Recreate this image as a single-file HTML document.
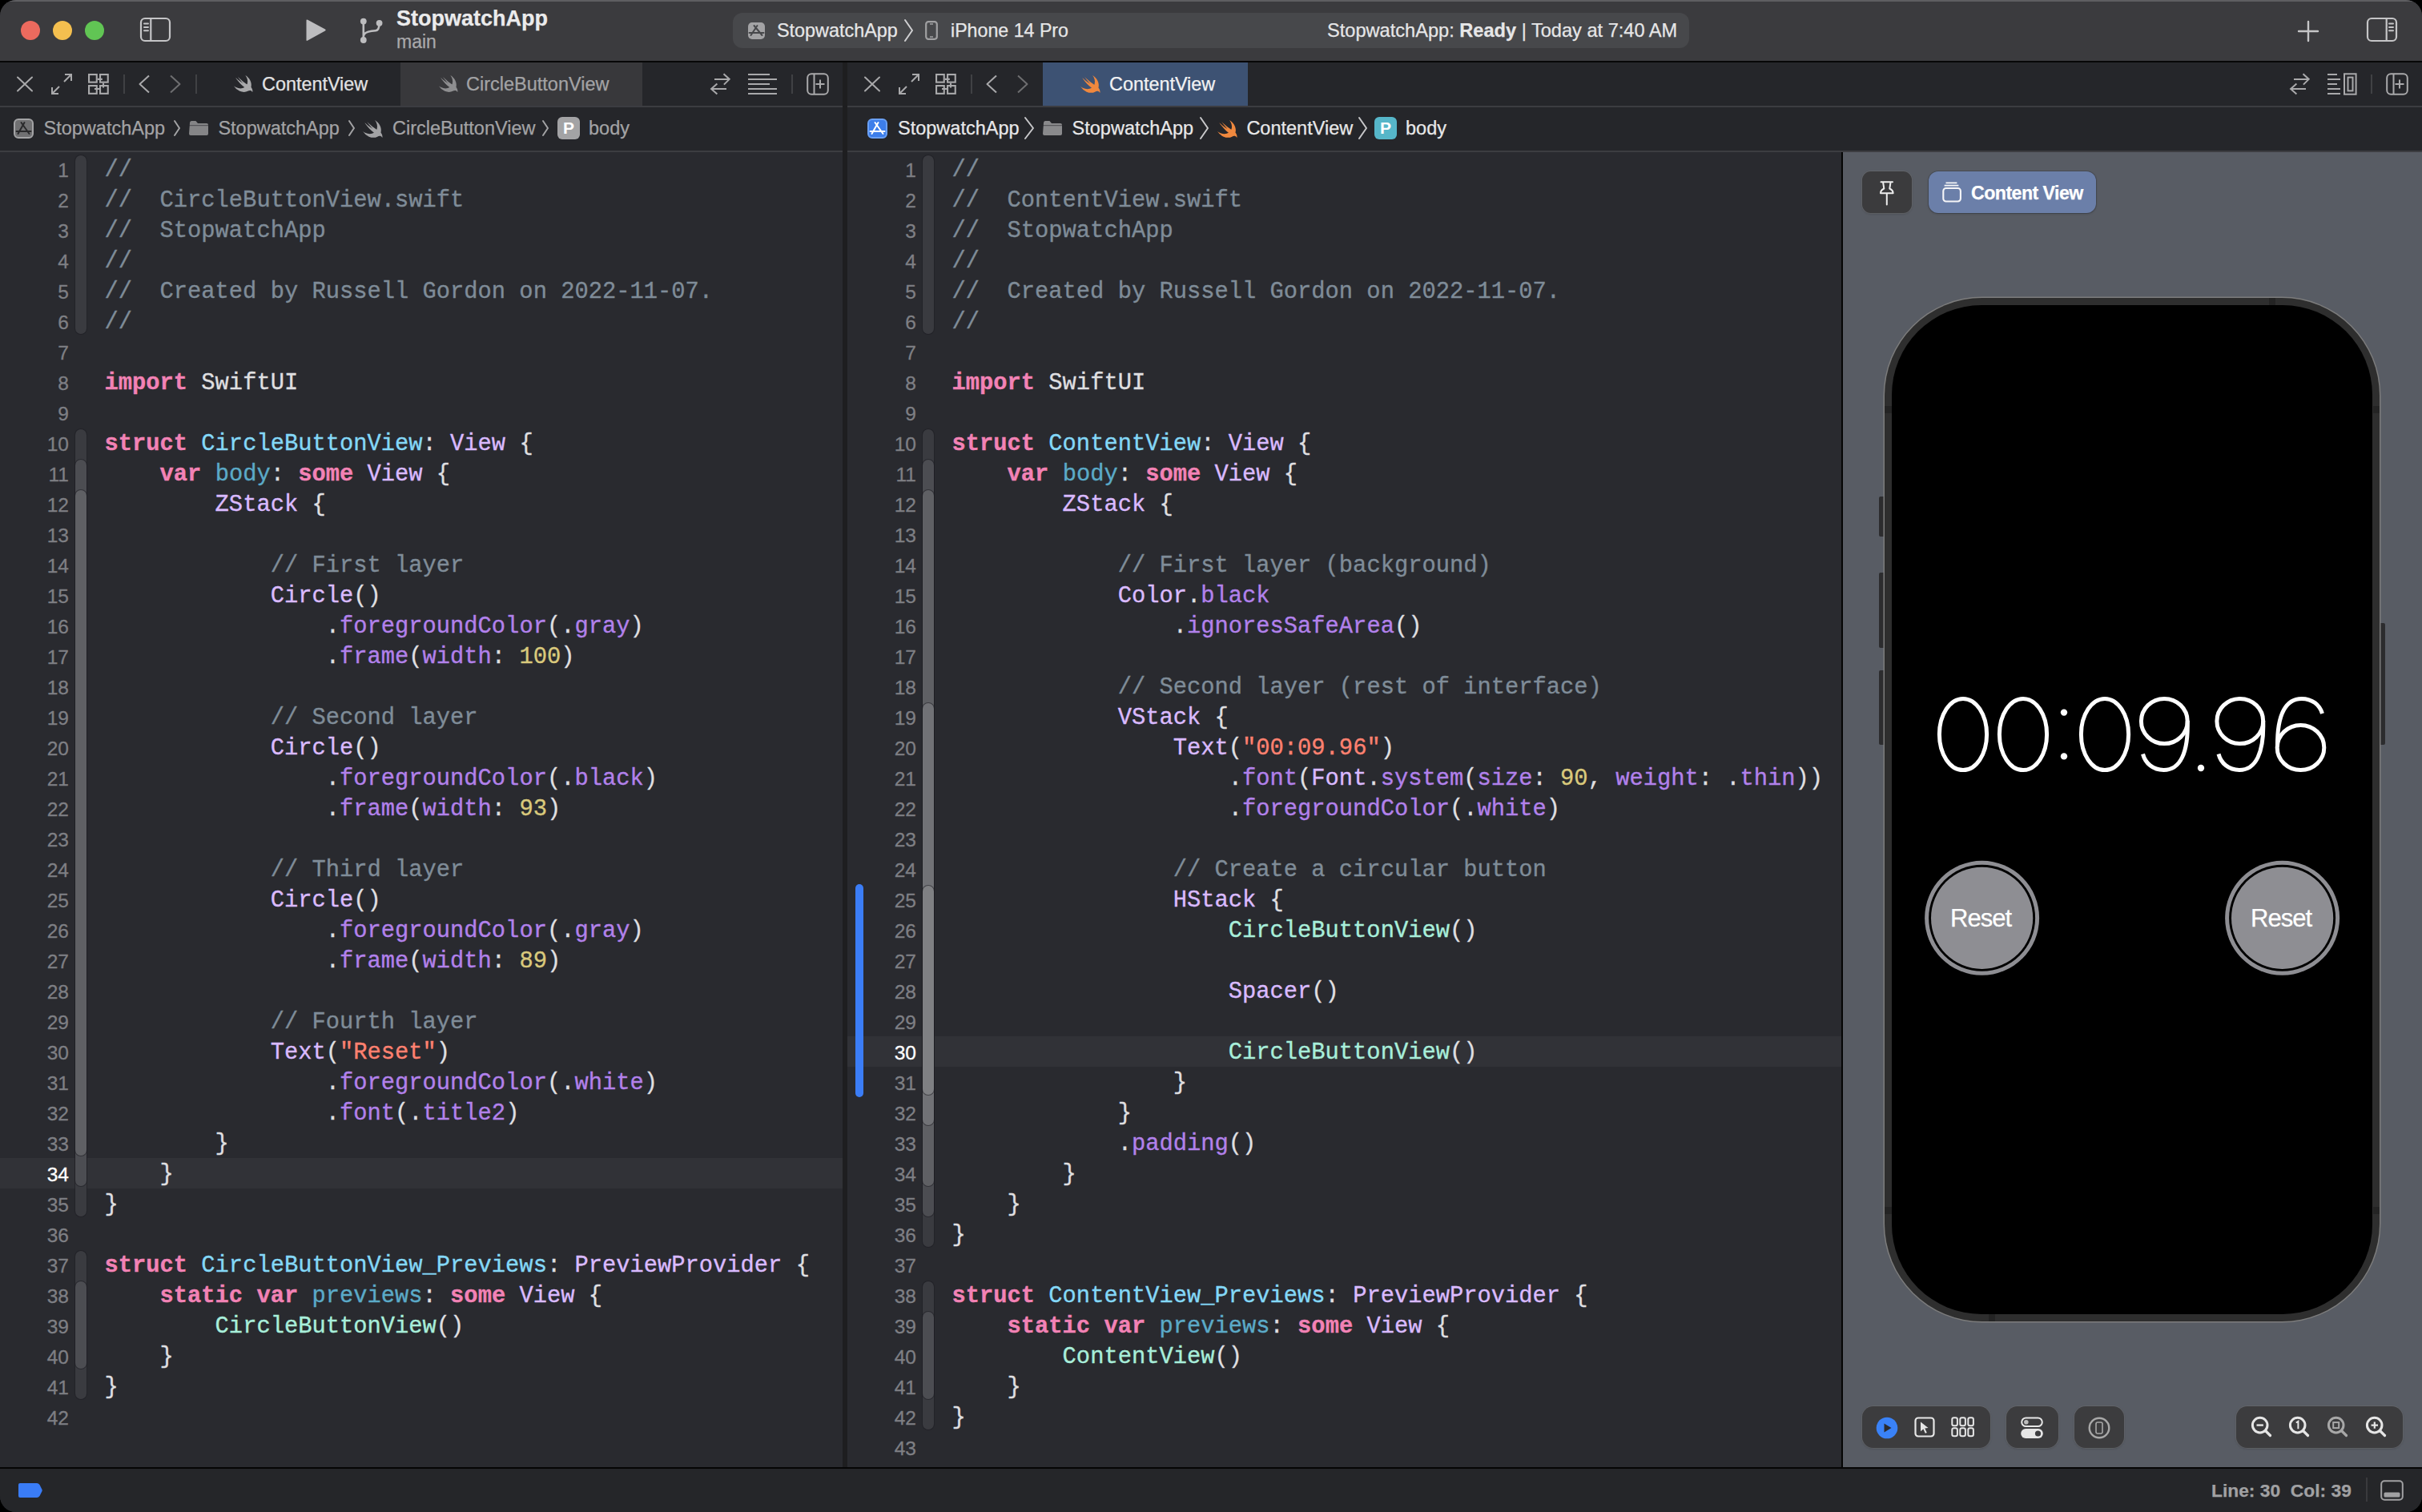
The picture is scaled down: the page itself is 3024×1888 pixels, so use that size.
<!DOCTYPE html>
<html><head><meta charset="utf-8"><style>
*{margin:0;padding:0;box-sizing:border-box}
html,body{width:3024px;height:1888px;overflow:hidden;background:#000}
body{position:relative;font-family:"Liberation Sans",sans-serif}
.abs{position:absolute}
#win{position:absolute;left:0;top:0;width:3024px;height:1888px;border-radius:20px;overflow:hidden;background:#292A30}
.ln{position:absolute;height:38.0px;line-height:38.0px;text-align:right;font-family:"Liberation Sans",sans-serif;font-size:24.5px;padding-top:2.6px;-webkit-text-stroke:0.3px currentColor}
.cl{position:absolute;height:38.0px;line-height:38.0px;white-space:pre;font-family:"Liberation Mono",monospace;font-size:28.78px;color:#DFDFE0;padding-top:2.9px;-webkit-text-stroke:0.35px currentColor}
.pl{color:#DFDFE0} .cm{color:#7F8C98} .kw{color:#F282B5;font-weight:bold} .ty{color:#DABAFF}
.fn{color:#B281EB} .dc{color:#84D8F7} .od{color:#5BAAC8} .nm{color:#D9C97C} .st{color:#FF8170} .pc{color:#A8EEDA}
.ui{position:absolute;white-space:pre;font-family:"Liberation Sans",sans-serif;-webkit-text-stroke:0.25px currentColor}
svg{position:absolute;overflow:visible}
</style></head>
<body><div id="win">
<div class="abs" style="left:0;top:0;width:3024px;height:76px;background:#3B3B3E;border-top:2px solid #5E5E61"></div>
<div class="abs" style="left:0;top:76px;width:3024px;height:2px;background:#070707"></div>
<div class="abs" style="left:26px;top:26px;width:24px;height:24px;border-radius:50%;background:#EC6A5E"></div>
<div class="abs" style="left:66px;top:26px;width:24px;height:24px;border-radius:50%;background:#F4BF4F"></div>
<div class="abs" style="left:106px;top:26px;width:24px;height:24px;border-radius:50%;background:#61C554"></div>
<svg style="left:174px;top:21px" width="40" height="32" viewBox="0 0 40 32"><rect x="2" y="2" width="36" height="28" rx="5" fill="none" stroke="#C5C5C7" stroke-width="2.2"/><line x1="14.3" y1="2" x2="14.3" y2="30" stroke="#C5C5C7" stroke-width="2.2"/><path d="M6 8.4h5M6 12.9h5M6 17.2h5" stroke="#C5C5C7" stroke-width="2" stroke-linecap="round"/></svg>
<svg style="left:380px;top:23px" width="28" height="30" viewBox="0 0 28 30"><path d="M2.5 2.5 Q2.5 0.8 4.2 1.8 L26 13.6 Q27.6 14.6 26 15.6 L4.2 27.6 Q2.5 28.6 2.5 27 Z" fill="#BDBDBF"/></svg>
<svg style="left:440px;top:16px" width="50" height="44" viewBox="0 0 50 44"><circle cx="13.8" cy="10.6" r="3.9" fill="#BDBDBF"/><circle cx="33.6" cy="12.8" r="3.9" fill="#BDBDBF"/><circle cx="13.8" cy="34" r="3.9" fill="#BDBDBF"/><path d="M13.8 10.6 V34 M13.8 29 C14.5 25 18 23.5 24 22.8 L29 22.3 C32 22 33.6 19 33.6 12.8" stroke="#BDBDBF" stroke-width="2.6" fill="none"/></svg>
<div class="ui" style="left:495.0px;top:8.32px;font-size:27px;line-height:31.05px;color:#EBEBEC;font-weight:bold;letter-spacing:0px;">StopwatchApp</div>
<div class="ui" style="left:495.0px;top:38.61px;font-size:23px;line-height:26.45px;color:#A9A9AB;font-weight:normal;letter-spacing:0px;">main</div>
<div class="abs" style="left:915px;top:16px;width:1194px;height:44px;border-radius:12px;background:#47484B"></div>
<svg style="left:933px;top:27px" width="23" height="23" viewBox="0 0 23 23"><rect x="1" y="1" width="21" height="21" rx="5" fill="#A3A3A5" /><path d="M4.5 17.0 L12.5 5.0 M8.5 5.0 L18.5 17.0 M2.5 14.0 L20.5 14.0" stroke="#47484B" stroke-width="2" fill="none" stroke-linecap="round"/></svg>
<div class="ui" style="left:970.0px;top:25.14px;font-size:23.4px;line-height:26.91px;color:#E6E6E7;font-weight:normal;letter-spacing:0px;">StopwatchApp</div>
<svg style="left:1129px;top:24px" width="11" height="28" viewBox="0 0 11 28"><path d="M1 1 L10 14.0 L1 27" stroke="#D0D0D2" stroke-width="2" fill="none" stroke-linecap="round" stroke-linejoin="round"/></svg>
<svg style="left:1155px;top:26px" width="16" height="24" viewBox="0 0 16 24"><rect x="1.2" y="1.2" width="13.6" height="21.6" rx="3" fill="none" stroke="#A0A0A2" stroke-width="2.2"/><path d="M6 4h4M6 20h4" stroke="#A0A0A2" stroke-width="1.4"/></svg>
<div class="ui" style="left:1187.0px;top:25.32px;font-size:23.2px;line-height:26.68px;color:#E6E6E7;font-weight:normal;letter-spacing:0px;">iPhone 14 Pro</div>
<div class="ui" style="left:1657.0px;top:24.95px;font-size:23.6px;line-height:27.14px;color:#E6E6E7;font-weight:normal;letter-spacing:0px;">StopwatchApp: <b>Ready</b> | Today at 7:40 AM</div>
<svg style="left:2868px;top:25px" width="28" height="28" viewBox="0 0 28 28"><path d="M14 2V26M2 14H26" stroke="#C5C5C7" stroke-width="2.4" stroke-linecap="round"/></svg>
<svg style="left:2954px;top:21px" width="40" height="32" viewBox="0 0 40 32"><rect x="2" y="2" width="36" height="28" rx="5" fill="none" stroke="#C5C5C7" stroke-width="2.2"/><line x1="25.7" y1="2" x2="25.7" y2="30" stroke="#C5C5C7" stroke-width="2.2"/><path d="M29 8.4h5M29 12.9h5M29 17.2h5" stroke="#C5C5C7" stroke-width="2" stroke-linecap="round"/></svg>
<div class="abs" style="left:0;top:78px;width:3024px;height:54px;background:#25262A"></div>
<div class="abs" style="left:0;top:132px;width:3024px;height:2px;background:#3C3D41"></div>
<div class="abs" style="left:0;top:134px;width:3024px;height:54px;background:#25262A"></div>
<div class="abs" style="left:0;top:188px;width:3024px;height:2px;background:#3C3D41"></div>
<svg style="left:20px;top:95px" width="22" height="20" viewBox="0 0 22 20"><path d="M2 1.5 L20 18.5 M20 1.5 L2 18.5" stroke="#A9A9AB" stroke-width="2" stroke-linecap="round"/></svg><svg style="left:63px;top:91px" width="28" height="28" viewBox="0 0 28 28"><path d="M11 17 L2 26 M2 18 V26 H10 M17 11 L26 2 M18 2 H26 V10" stroke="#A9A9AB" stroke-width="2" fill="none"/></svg><svg style="left:109px;top:91px" width="28" height="28" viewBox="0 0 28 28"><rect x="2.05" y="2.05" width="9.7" height="9.6" fill="none" stroke="#A9A9AB" stroke-width="2.1"/><rect x="16.05" y="2.05" width="9.7" height="9.6" fill="none" stroke="#A9A9AB" stroke-width="2.1"/><rect x="2.05" y="16.05" width="9.7" height="9.8" fill="none" stroke="#A9A9AB" stroke-width="2.1"/><rect x="16.05" y="16.05" width="9.7" height="9.8" fill="none" stroke="#A9A9AB" stroke-width="2.1"/><path d="M12.8 7.9 H18.8 M20 12.7 V18.5 M9 20 H15" stroke="#A9A9AB" stroke-width="2.1"/></svg><div class="abs" style="left:154px;top:93px;width:2px;height:24px;background:#404144"></div><svg style="left:172px;top:93px" width="16" height="24" viewBox="0 0 16 24"><path d="M14 1.5 L2.5 12 L14 22.5" stroke="#A9A9AB" stroke-width="2" fill="none" stroke-linejoin="round"/></svg><svg style="left:211px;top:93px" width="16" height="24" viewBox="0 0 16 24"><path d="M2 1.5 L13.5 12 L2 22.5" stroke="#6E6E70" stroke-width="2" fill="none" stroke-linejoin="round"/></svg><div class="abs" style="left:244px;top:93px;width:2px;height:24px;background:#404144"></div>
<svg style="left:1078px;top:95px" width="22" height="20" viewBox="0 0 22 20"><path d="M2 1.5 L20 18.5 M20 1.5 L2 18.5" stroke="#A9A9AB" stroke-width="2" stroke-linecap="round"/></svg><svg style="left:1121px;top:91px" width="28" height="28" viewBox="0 0 28 28"><path d="M11 17 L2 26 M2 18 V26 H10 M17 11 L26 2 M18 2 H26 V10" stroke="#A9A9AB" stroke-width="2" fill="none"/></svg><svg style="left:1167px;top:91px" width="28" height="28" viewBox="0 0 28 28"><rect x="2.05" y="2.05" width="9.7" height="9.6" fill="none" stroke="#A9A9AB" stroke-width="2.1"/><rect x="16.05" y="2.05" width="9.7" height="9.6" fill="none" stroke="#A9A9AB" stroke-width="2.1"/><rect x="2.05" y="16.05" width="9.7" height="9.8" fill="none" stroke="#A9A9AB" stroke-width="2.1"/><rect x="16.05" y="16.05" width="9.7" height="9.8" fill="none" stroke="#A9A9AB" stroke-width="2.1"/><path d="M12.8 7.9 H18.8 M20 12.7 V18.5 M9 20 H15" stroke="#A9A9AB" stroke-width="2.1"/></svg><div class="abs" style="left:1212px;top:93px;width:2px;height:24px;background:#404144"></div><svg style="left:1230px;top:93px" width="16" height="24" viewBox="0 0 16 24"><path d="M14 1.5 L2.5 12 L14 22.5" stroke="#A9A9AB" stroke-width="2" fill="none" stroke-linejoin="round"/></svg><svg style="left:1269px;top:93px" width="16" height="24" viewBox="0 0 16 24"><path d="M2 1.5 L13.5 12 L2 22.5" stroke="#6E6E70" stroke-width="2" fill="none" stroke-linejoin="round"/></svg><div class="abs" style="left:1302px;top:93px;width:2px;height:24px;background:#404144"></div>
<svg style="left:290.1px;top:93.9px" width="25.8" height="22.0" viewBox="0.9 3.4 19.9 17"><path d="M13.543 3.41c4.114 2.47 6.545 7.162 5.549 11.131-.024.093-.05.181-.076.272l.002.001c2.062 2.538 1.5 5.258 1.236 4.745-1.072-2.086-3.066-1.568-4.088-1.043a6.803 6.803 0 0 1-.281.158l-.02.012-.002.002c-2.115 1.123-4.957 1.205-7.812-.022a12.568 12.568 0 0 1-5.64-4.838c.649.48 1.35.902 2.097 1.252 3.019 1.414 6.051 1.311 8.197-.002C9.651 12.73 7.101 9.67 5.146 7.191a10.628 10.628 0 0 1-1.005-1.384c2.34 2.142 6.038 4.83 7.365 5.576C8.69 8.408 6.208 4.743 6.324 4.86c4.436 4.47 8.528 6.996 8.528 6.996.154.085.27.154.36.213.085-.215.16-.437.224-.668.708-2.588-.09-5.548-1.893-7.992z" fill="#A9A9AB"/></svg>
<div class="ui" style="left:327.0px;top:92.04px;font-size:23.4px;line-height:26.91px;color:#E2E2E3;font-weight:normal;letter-spacing:0px;">ContentView</div>
<div class="abs" style="left:500px;top:78px;width:302px;height:54px;background:#38383B"></div>
<svg style="left:546.1px;top:93.9px" width="25.8" height="22.0" viewBox="0.9 3.4 19.9 17"><path d="M13.543 3.41c4.114 2.47 6.545 7.162 5.549 11.131-.024.093-.05.181-.076.272l.002.001c2.062 2.538 1.5 5.258 1.236 4.745-1.072-2.086-3.066-1.568-4.088-1.043a6.803 6.803 0 0 1-.281.158l-.02.012-.002.002c-2.115 1.123-4.957 1.205-7.812-.022a12.568 12.568 0 0 1-5.64-4.838c.649.48 1.35.902 2.097 1.252 3.019 1.414 6.051 1.311 8.197-.002C9.651 12.73 7.101 9.67 5.146 7.191a10.628 10.628 0 0 1-1.005-1.384c2.34 2.142 6.038 4.83 7.365 5.576C8.69 8.408 6.208 4.743 6.324 4.86c4.436 4.47 8.528 6.996 8.528 6.996.154.085.27.154.36.213.085-.215.16-.437.224-.668.708-2.588-.09-5.548-1.893-7.992z" fill="#8E8E90"/></svg>
<div class="ui" style="left:582.0px;top:91.94px;font-size:23.5px;line-height:27.02px;color:#A3A3A5;font-weight:normal;letter-spacing:0px;">CircleButtonView</div>
<svg style="left:887px;top:90px" width="26" height="30" viewBox="0 0 26 30"><path d="M5 8.9 H23.7 M16.5 2.3 L23.7 8.9 L16.9 15.6 M20 21 H1.2 M8.4 14.5 L1.1 21 L8.4 27.4" stroke="#A9A9AB" stroke-width="2" fill="none"/></svg>
<svg style="left:933px;top:91px" width="38" height="28" viewBox="0 0 38 28"><path d="M1 2h27 M1 8h36 M1 14h27 M1 20h36 M1 26h36" stroke="#A9A9AB" stroke-width="2"/></svg>
<div class="abs" style="left:988px;top:93px;width:2px;height:24px;background:#404144"></div>
<svg style="left:1007px;top:91px" width="28" height="28" viewBox="0 0 28 28"><rect x="1.2" y="1.2" width="25.6" height="25.6" rx="5" fill="none" stroke="#A9A9AB" stroke-width="2"/><line x1="9.5" y1="1.2" x2="9.5" y2="26.8" stroke="#A9A9AB" stroke-width="2"/><path d="M17 8.5V19.5M11.5 14H22.5" stroke="#A9A9AB" stroke-width="2"/></svg>
<div class="abs" style="left:1302px;top:78px;width:256px;height:54px;background:#3D5273"></div>
<svg style="left:1347.1px;top:93.9px" width="26.9" height="23.0" viewBox="0.9 3.4 19.9 17"><path d="M13.543 3.41c4.114 2.47 6.545 7.162 5.549 11.131-.024.093-.05.181-.076.272l.002.001c2.062 2.538 1.5 5.258 1.236 4.745-1.072-2.086-3.066-1.568-4.088-1.043a6.803 6.803 0 0 1-.281.158l-.02.012-.002.002c-2.115 1.123-4.957 1.205-7.812-.022a12.568 12.568 0 0 1-5.64-4.838c.649.48 1.35.902 2.097 1.252 3.019 1.414 6.051 1.311 8.197-.002C9.651 12.73 7.101 9.67 5.146 7.191a10.628 10.628 0 0 1-1.005-1.384c2.34 2.142 6.038 4.83 7.365 5.576C8.69 8.408 6.208 4.743 6.324 4.86c4.436 4.47 8.528 6.996 8.528 6.996.154.085.27.154.36.213.085-.215.16-.437.224-.668.708-2.588-.09-5.548-1.893-7.992z" fill="#F0883E"/></svg>
<div class="ui" style="left:1385.0px;top:92.04px;font-size:23.4px;line-height:26.91px;color:#F2F2F3;font-weight:normal;letter-spacing:0px;">ContentView</div>
<svg style="left:2859px;top:90px" width="26" height="30" viewBox="0 0 26 30"><path d="M5 8.9 H23.7 M16.5 2.3 L23.7 8.9 L16.9 15.6 M20 21 H1.2 M8.4 14.5 L1.1 21 L8.4 27.4" stroke="#A9A9AB" stroke-width="2" fill="none"/></svg>
<svg style="left:2905px;top:91px" width="38" height="28" viewBox="0 0 38 28"><path d="M1 2h12 M1 8h16 M1 14h12 M1 20h16 M1 26h16" stroke="#A9A9AB" stroke-width="2"/><rect x="22" y="1.3" width="14.6" height="25.4" fill="none" stroke="#A9A9AB" stroke-width="2"/><rect x="26.5" y="5.6" width="6" height="16.8" fill="none" stroke="#A9A9AB" stroke-width="2"/></svg>
<div class="abs" style="left:2960px;top:93px;width:2px;height:24px;background:#404144"></div>
<svg style="left:2979px;top:91px" width="28" height="28" viewBox="0 0 28 28"><rect x="1.2" y="1.2" width="25.6" height="25.6" rx="5" fill="none" stroke="#A9A9AB" stroke-width="2"/><line x1="9.5" y1="1.2" x2="9.5" y2="26.8" stroke="#A9A9AB" stroke-width="2"/><path d="M17 8.5V19.5M11.5 14H22.5" stroke="#A9A9AB" stroke-width="2"/></svg>
<svg style="left:17px;top:148px" width="25" height="25" viewBox="0 0 25 25"><rect x="1" y="1" width="23" height="23" rx="5" fill="#707072" stroke="#A3A3A5" stroke-width="2"/><path d="M5.5 19.0 L13.5 5.0 M9.5 5.0 L19.5 19.0 M3.5 16.0 L21.5 16.0" stroke="#2A2A2C" stroke-width="2" fill="none" stroke-linecap="round"/></svg>
<div class="ui" style="left:54.5px;top:146.54px;font-size:23.5px;line-height:27.02px;color:#A3A3A5;font-weight:normal;letter-spacing:0px;">StopwatchApp</div>
<svg style="left:217px;top:150px" width="8" height="20" viewBox="0 0 8 20"><path d="M1 1 L7 10.0 L1 19" stroke="#A3A3A5" stroke-width="2" fill="none" stroke-linecap="round" stroke-linejoin="round"/></svg>
<svg style="left:235px;top:150px" width="26" height="20" viewBox="0 0 26 20"><path d="M2 3.6 Q2 1 4 1 L9.4 1 L12.0 4.0 L23.0 4.0 Q25.0 4.0 25.0 6.0 L25.0 17.0 Q25.0 19.0 23.0 19.0 L3 19.0 Q1 19.0 1 17.0 Z" fill="#858587"/><rect x="1" y="6.0" width="24" height="1.2" fill="#25262A" opacity="0.5"/></svg>
<div class="ui" style="left:272.4px;top:146.54px;font-size:23.5px;line-height:27.02px;color:#A3A3A5;font-weight:normal;letter-spacing:0px;">StopwatchApp</div>
<svg style="left:435px;top:150px" width="8" height="20" viewBox="0 0 8 20"><path d="M1 1 L7 10.0 L1 19" stroke="#A3A3A5" stroke-width="2" fill="none" stroke-linecap="round" stroke-linejoin="round"/></svg>
<svg style="left:451.1px;top:149.9px" width="26.9" height="23.0" viewBox="0.9 3.4 19.9 17"><path d="M13.543 3.41c4.114 2.47 6.545 7.162 5.549 11.131-.024.093-.05.181-.076.272l.002.001c2.062 2.538 1.5 5.258 1.236 4.745-1.072-2.086-3.066-1.568-4.088-1.043a6.803 6.803 0 0 1-.281.158l-.02.012-.002.002c-2.115 1.123-4.957 1.205-7.812-.022a12.568 12.568 0 0 1-5.64-4.838c.649.48 1.35.902 2.097 1.252 3.019 1.414 6.051 1.311 8.197-.002C9.651 12.73 7.101 9.67 5.146 7.191a10.628 10.628 0 0 1-1.005-1.384c2.34 2.142 6.038 4.83 7.365 5.576C8.69 8.408 6.208 4.743 6.324 4.86c4.436 4.47 8.528 6.996 8.528 6.996.154.085.27.154.36.213.085-.215.16-.437.224-.668.708-2.588-.09-5.548-1.893-7.992z" fill="#A3A3A5"/></svg>
<div class="ui" style="left:490.0px;top:146.54px;font-size:23.5px;line-height:27.02px;color:#A3A3A5;font-weight:normal;letter-spacing:0px;">CircleButtonView</div>
<svg style="left:677px;top:150px" width="8" height="20" viewBox="0 0 8 20"><path d="M1 1 L7 10.0 L1 19" stroke="#A3A3A5" stroke-width="2" fill="none" stroke-linecap="round" stroke-linejoin="round"/></svg>
<div class="abs" style="left:696px;top:146px;width:28px;height:28px;border-radius:6px;background:#A3A3A5;color:#FFFFFF;font-family:'Liberation Sans',sans-serif;font-weight:bold;font-size:21px;line-height:28px;text-align:center">P</div>
<div class="ui" style="left:735.0px;top:146.54px;font-size:23.5px;line-height:27.02px;color:#A3A3A5;font-weight:normal;letter-spacing:0px;">body</div>
<svg style="left:1083px;top:148px" width="25" height="25" viewBox="0 0 25 25"><rect x="1" y="1" width="23" height="23" rx="5" fill="#3D7EEA" stroke="#6AA0F5" stroke-width="2"/><path d="M5.5 19.0 L13.5 5.0 M9.5 5.0 L19.5 19.0 M3.5 16.0 L21.5 16.0" stroke="#FFFFFF" stroke-width="2" fill="none" stroke-linecap="round"/></svg>
<div class="ui" style="left:1121.0px;top:146.54px;font-size:23.5px;line-height:27.02px;color:#E8E8E9;font-weight:normal;letter-spacing:0px;">StopwatchApp</div>
<svg style="left:1279px;top:146px" width="12" height="28" viewBox="0 0 12 28"><path d="M1 1 L11 14.0 L1 27" stroke="#C8C8CA" stroke-width="2" fill="none" stroke-linecap="round" stroke-linejoin="round"/></svg>
<svg style="left:1301px;top:150px" width="26" height="20" viewBox="0 0 26 20"><path d="M2 3.6 Q2 1 4 1 L9.4 1 L12.0 4.0 L23.0 4.0 Q25.0 4.0 25.0 6.0 L25.0 17.0 Q25.0 19.0 23.0 19.0 L3 19.0 Q1 19.0 1 17.0 Z" fill="#8A8A8C"/><rect x="1" y="6.0" width="24" height="1.2" fill="#25262A" opacity="0.5"/></svg>
<div class="ui" style="left:1338.6px;top:146.54px;font-size:23.5px;line-height:27.02px;color:#E8E8E9;font-weight:normal;letter-spacing:0px;">StopwatchApp</div>
<svg style="left:1498px;top:146px" width="11" height="28" viewBox="0 0 11 28"><path d="M1 1 L10 14.0 L1 27" stroke="#C8C8CA" stroke-width="2" fill="none" stroke-linecap="round" stroke-linejoin="round"/></svg>
<svg style="left:1517.8px;top:149.9px" width="26.9" height="23.0" viewBox="0.9 3.4 19.9 17"><path d="M13.543 3.41c4.114 2.47 6.545 7.162 5.549 11.131-.024.093-.05.181-.076.272l.002.001c2.062 2.538 1.5 5.258 1.236 4.745-1.072-2.086-3.066-1.568-4.088-1.043a6.803 6.803 0 0 1-.281.158l-.02.012-.002.002c-2.115 1.123-4.957 1.205-7.812-.022a12.568 12.568 0 0 1-5.64-4.838c.649.48 1.35.902 2.097 1.252 3.019 1.414 6.051 1.311 8.197-.002C9.651 12.73 7.101 9.67 5.146 7.191a10.628 10.628 0 0 1-1.005-1.384c2.34 2.142 6.038 4.83 7.365 5.576C8.69 8.408 6.208 4.743 6.324 4.86c4.436 4.47 8.528 6.996 8.528 6.996.154.085.27.154.36.213.085-.215.16-.437.224-.668.708-2.588-.09-5.548-1.893-7.992z" fill="#F0883E"/></svg>
<div class="ui" style="left:1556.4px;top:146.54px;font-size:23.5px;line-height:27.02px;color:#E8E8E9;font-weight:normal;letter-spacing:0px;">ContentView</div>
<svg style="left:1695.5px;top:146px" width="11" height="28" viewBox="0 0 11 28"><path d="M1 1 L10 14.0 L1 27" stroke="#C8C8CA" stroke-width="2" fill="none" stroke-linecap="round" stroke-linejoin="round"/></svg>
<div class="abs" style="left:1716px;top:146px;width:28px;height:28px;border-radius:6px;background:#56B6C9;color:#FFFFFF;font-family:'Liberation Sans',sans-serif;font-weight:bold;font-size:21px;line-height:28px;text-align:center">P</div>
<div class="ui" style="left:1755.0px;top:146.54px;font-size:23.5px;line-height:27.02px;color:#E8E8E9;font-weight:normal;letter-spacing:0px;">body</div>
<div class="abs" style="left:0;top:190px;width:1052px;height:1642px;background:#292A2F;overflow:hidden">
<div style="position:absolute;left:0px;top:1255.60px;width:1052px;height:38.00px;background:#313237"></div>
<div style="position:absolute;left:94px;top:3.90px;width:14px;height:223.40px;background:#3A3B40;border-radius:7px;box-shadow:0 0 0 1px rgba(30,30,34,.55)"></div>
<div style="position:absolute;left:94px;top:345.90px;width:14px;height:983.40px;background:#3A3B40;border-radius:7px;box-shadow:0 0 0 1px rgba(30,30,34,.55)"></div>
<div style="position:absolute;left:94px;top:383.90px;width:14px;height:907.40px;background:#4C4D52;border-radius:7px;box-shadow:0 0 0 1px rgba(30,30,34,.55)"></div>
<div style="position:absolute;left:94px;top:421.90px;width:14px;height:831.40px;background:#5F6064;border-radius:7px;box-shadow:0 0 0 1px rgba(30,30,34,.55)"></div>
<div style="position:absolute;left:94px;top:1371.90px;width:14px;height:185.40px;background:#3A3B40;border-radius:7px;box-shadow:0 0 0 1px rgba(30,30,34,.55)"></div>
<div style="position:absolute;left:94px;top:1409.90px;width:14px;height:109.40px;background:#4C4D52;border-radius:7px;box-shadow:0 0 0 1px rgba(30,30,34,.55)"></div>
<div class="ln" style="left:0px;top:1.60px;width:86px;color:#7E7F84">1</div>
<div class="cl" style="left:130.50px;top:1.60px"><span class="cm">//</span></div>
<div class="ln" style="left:0px;top:39.60px;width:86px;color:#7E7F84">2</div>
<div class="cl" style="left:130.50px;top:39.60px"><span class="cm">//  CircleButtonView.swift</span></div>
<div class="ln" style="left:0px;top:77.60px;width:86px;color:#7E7F84">3</div>
<div class="cl" style="left:130.50px;top:77.60px"><span class="cm">//  StopwatchApp</span></div>
<div class="ln" style="left:0px;top:115.60px;width:86px;color:#7E7F84">4</div>
<div class="cl" style="left:130.50px;top:115.60px"><span class="cm">//</span></div>
<div class="ln" style="left:0px;top:153.60px;width:86px;color:#7E7F84">5</div>
<div class="cl" style="left:130.50px;top:153.60px"><span class="cm">//  Created by Russell Gordon on 2022-11-07.</span></div>
<div class="ln" style="left:0px;top:191.60px;width:86px;color:#7E7F84">6</div>
<div class="cl" style="left:130.50px;top:191.60px"><span class="cm">//</span></div>
<div class="ln" style="left:0px;top:229.60px;width:86px;color:#7E7F84">7</div>
<div class="ln" style="left:0px;top:267.60px;width:86px;color:#7E7F84">8</div>
<div class="cl" style="left:130.50px;top:267.60px"><span class="kw">import</span><span class="pl"> SwiftUI</span></div>
<div class="ln" style="left:0px;top:305.60px;width:86px;color:#7E7F84">9</div>
<div class="ln" style="left:0px;top:343.60px;width:86px;color:#7E7F84">10</div>
<div class="cl" style="left:130.50px;top:343.60px"><span class="kw">struct</span><span class="pl"> </span><span class="dc">CircleButtonView</span><span class="pl">: </span><span class="ty">View</span><span class="pl"> {</span></div>
<div class="ln" style="left:0px;top:381.60px;width:86px;color:#7E7F84">11</div>
<div class="cl" style="left:130.50px;top:381.60px"><span class="pl">    </span><span class="kw">var</span><span class="pl"> </span><span class="od">body</span><span class="pl">: </span><span class="kw">some</span><span class="pl"> </span><span class="ty">View</span><span class="pl"> {</span></div>
<div class="ln" style="left:0px;top:419.60px;width:86px;color:#7E7F84">12</div>
<div class="cl" style="left:130.50px;top:419.60px"><span class="pl">        </span><span class="ty">ZStack</span><span class="pl"> {</span></div>
<div class="ln" style="left:0px;top:457.60px;width:86px;color:#7E7F84">13</div>
<div class="ln" style="left:0px;top:495.60px;width:86px;color:#7E7F84">14</div>
<div class="cl" style="left:130.50px;top:495.60px"><span class="pl">            </span><span class="cm">// First layer</span></div>
<div class="ln" style="left:0px;top:533.60px;width:86px;color:#7E7F84">15</div>
<div class="cl" style="left:130.50px;top:533.60px"><span class="pl">            </span><span class="ty">Circle</span><span class="pl">()</span></div>
<div class="ln" style="left:0px;top:571.60px;width:86px;color:#7E7F84">16</div>
<div class="cl" style="left:130.50px;top:571.60px"><span class="pl">                .</span><span class="fn">foregroundColor</span><span class="pl">(.</span><span class="fn">gray</span><span class="pl">)</span></div>
<div class="ln" style="left:0px;top:609.60px;width:86px;color:#7E7F84">17</div>
<div class="cl" style="left:130.50px;top:609.60px"><span class="pl">                .</span><span class="fn">frame</span><span class="pl">(</span><span class="fn">width</span><span class="pl">: </span><span class="nm">100</span><span class="pl">)</span></div>
<div class="ln" style="left:0px;top:647.60px;width:86px;color:#7E7F84">18</div>
<div class="ln" style="left:0px;top:685.60px;width:86px;color:#7E7F84">19</div>
<div class="cl" style="left:130.50px;top:685.60px"><span class="pl">            </span><span class="cm">// Second layer</span></div>
<div class="ln" style="left:0px;top:723.60px;width:86px;color:#7E7F84">20</div>
<div class="cl" style="left:130.50px;top:723.60px"><span class="pl">            </span><span class="ty">Circle</span><span class="pl">()</span></div>
<div class="ln" style="left:0px;top:761.60px;width:86px;color:#7E7F84">21</div>
<div class="cl" style="left:130.50px;top:761.60px"><span class="pl">                .</span><span class="fn">foregroundColor</span><span class="pl">(.</span><span class="fn">black</span><span class="pl">)</span></div>
<div class="ln" style="left:0px;top:799.60px;width:86px;color:#7E7F84">22</div>
<div class="cl" style="left:130.50px;top:799.60px"><span class="pl">                .</span><span class="fn">frame</span><span class="pl">(</span><span class="fn">width</span><span class="pl">: </span><span class="nm">93</span><span class="pl">)</span></div>
<div class="ln" style="left:0px;top:837.60px;width:86px;color:#7E7F84">23</div>
<div class="ln" style="left:0px;top:875.60px;width:86px;color:#7E7F84">24</div>
<div class="cl" style="left:130.50px;top:875.60px"><span class="pl">            </span><span class="cm">// Third layer</span></div>
<div class="ln" style="left:0px;top:913.60px;width:86px;color:#7E7F84">25</div>
<div class="cl" style="left:130.50px;top:913.60px"><span class="pl">            </span><span class="ty">Circle</span><span class="pl">()</span></div>
<div class="ln" style="left:0px;top:951.60px;width:86px;color:#7E7F84">26</div>
<div class="cl" style="left:130.50px;top:951.60px"><span class="pl">                .</span><span class="fn">foregroundColor</span><span class="pl">(.</span><span class="fn">gray</span><span class="pl">)</span></div>
<div class="ln" style="left:0px;top:989.60px;width:86px;color:#7E7F84">27</div>
<div class="cl" style="left:130.50px;top:989.60px"><span class="pl">                .</span><span class="fn">frame</span><span class="pl">(</span><span class="fn">width</span><span class="pl">: </span><span class="nm">89</span><span class="pl">)</span></div>
<div class="ln" style="left:0px;top:1027.60px;width:86px;color:#7E7F84">28</div>
<div class="ln" style="left:0px;top:1065.60px;width:86px;color:#7E7F84">29</div>
<div class="cl" style="left:130.50px;top:1065.60px"><span class="pl">            </span><span class="cm">// Fourth layer</span></div>
<div class="ln" style="left:0px;top:1103.60px;width:86px;color:#7E7F84">30</div>
<div class="cl" style="left:130.50px;top:1103.60px"><span class="pl">            </span><span class="ty">Text</span><span class="pl">(</span><span class="st">&quot;Reset&quot;</span><span class="pl">)</span></div>
<div class="ln" style="left:0px;top:1141.60px;width:86px;color:#7E7F84">31</div>
<div class="cl" style="left:130.50px;top:1141.60px"><span class="pl">                .</span><span class="fn">foregroundColor</span><span class="pl">(.</span><span class="fn">white</span><span class="pl">)</span></div>
<div class="ln" style="left:0px;top:1179.60px;width:86px;color:#7E7F84">32</div>
<div class="cl" style="left:130.50px;top:1179.60px"><span class="pl">                .</span><span class="fn">font</span><span class="pl">(.</span><span class="fn">title2</span><span class="pl">)</span></div>
<div class="ln" style="left:0px;top:1217.60px;width:86px;color:#7E7F84">33</div>
<div class="cl" style="left:130.50px;top:1217.60px"><span class="pl">        }</span></div>
<div class="ln" style="left:0px;top:1255.60px;width:86px;color:#FFFFFF">34</div>
<div class="cl" style="left:130.50px;top:1255.60px"><span class="pl">    }</span></div>
<div class="ln" style="left:0px;top:1293.60px;width:86px;color:#7E7F84">35</div>
<div class="cl" style="left:130.50px;top:1293.60px"><span class="pl">}</span></div>
<div class="ln" style="left:0px;top:1331.60px;width:86px;color:#7E7F84">36</div>
<div class="ln" style="left:0px;top:1369.60px;width:86px;color:#7E7F84">37</div>
<div class="cl" style="left:130.50px;top:1369.60px"><span class="kw">struct</span><span class="pl"> </span><span class="dc">CircleButtonView_Previews</span><span class="pl">: </span><span class="ty">PreviewProvider</span><span class="pl"> {</span></div>
<div class="ln" style="left:0px;top:1407.60px;width:86px;color:#7E7F84">38</div>
<div class="cl" style="left:130.50px;top:1407.60px"><span class="pl">    </span><span class="kw">static</span><span class="pl"> </span><span class="kw">var</span><span class="pl"> </span><span class="od">previews</span><span class="pl">: </span><span class="kw">some</span><span class="pl"> </span><span class="ty">View</span><span class="pl"> {</span></div>
<div class="ln" style="left:0px;top:1445.60px;width:86px;color:#7E7F84">39</div>
<div class="cl" style="left:130.50px;top:1445.60px"><span class="pl">        </span><span class="pc">CircleButtonView</span><span class="pl">()</span></div>
<div class="ln" style="left:0px;top:1483.60px;width:86px;color:#7E7F84">40</div>
<div class="cl" style="left:130.50px;top:1483.60px"><span class="pl">    }</span></div>
<div class="ln" style="left:0px;top:1521.60px;width:86px;color:#7E7F84">41</div>
<div class="cl" style="left:130.50px;top:1521.60px"><span class="pl">}</span></div>
<div class="ln" style="left:0px;top:1559.60px;width:86px;color:#7E7F84">42</div>
</div>
<div class="abs" style="left:1058px;top:190px;width:1241px;height:1642px;background:#292A2F;overflow:hidden">
<div style="position:absolute;left:0px;top:1103.60px;width:1241px;height:38.00px;background:#313237"></div>
<div style="position:absolute;left:94px;top:3.90px;width:14px;height:223.40px;background:#3A3B40;border-radius:7px;box-shadow:0 0 0 1px rgba(30,30,34,.55)"></div>
<div style="position:absolute;left:94px;top:345.90px;width:14px;height:1021.40px;background:#3A3B40;border-radius:7px;box-shadow:0 0 0 1px rgba(30,30,34,.55)"></div>
<div style="position:absolute;left:94px;top:383.90px;width:14px;height:945.40px;background:#4C4D52;border-radius:7px;box-shadow:0 0 0 1px rgba(30,30,34,.55)"></div>
<div style="position:absolute;left:94px;top:421.90px;width:14px;height:869.40px;background:#5F6064;border-radius:7px;box-shadow:0 0 0 1px rgba(30,30,34,.55)"></div>
<div style="position:absolute;left:94px;top:687.90px;width:14px;height:527.40px;background:#717276;border-radius:7px;box-shadow:0 0 0 1px rgba(30,30,34,.55)"></div>
<div style="position:absolute;left:94px;top:915.90px;width:14px;height:261.40px;background:#7F8083;border-radius:7px;box-shadow:0 0 0 1px rgba(30,30,34,.55)"></div>
<div style="position:absolute;left:94px;top:1409.90px;width:14px;height:185.40px;background:#3A3B40;border-radius:7px;box-shadow:0 0 0 1px rgba(30,30,34,.55)"></div>
<div style="position:absolute;left:94px;top:1447.90px;width:14px;height:109.40px;background:#4C4D52;border-radius:7px;box-shadow:0 0 0 1px rgba(30,30,34,.55)"></div>
<div style="position:absolute;left:10px;top:913.60px;width:10px;height:266.00px;background:#3B7DF7;border-radius:5px"></div>
<div class="ln" style="left:0px;top:1.60px;width:86px;color:#7E7F84">1</div>
<div class="cl" style="left:130.50px;top:1.60px"><span class="cm">//</span></div>
<div class="ln" style="left:0px;top:39.60px;width:86px;color:#7E7F84">2</div>
<div class="cl" style="left:130.50px;top:39.60px"><span class="cm">//  ContentView.swift</span></div>
<div class="ln" style="left:0px;top:77.60px;width:86px;color:#7E7F84">3</div>
<div class="cl" style="left:130.50px;top:77.60px"><span class="cm">//  StopwatchApp</span></div>
<div class="ln" style="left:0px;top:115.60px;width:86px;color:#7E7F84">4</div>
<div class="cl" style="left:130.50px;top:115.60px"><span class="cm">//</span></div>
<div class="ln" style="left:0px;top:153.60px;width:86px;color:#7E7F84">5</div>
<div class="cl" style="left:130.50px;top:153.60px"><span class="cm">//  Created by Russell Gordon on 2022-11-07.</span></div>
<div class="ln" style="left:0px;top:191.60px;width:86px;color:#7E7F84">6</div>
<div class="cl" style="left:130.50px;top:191.60px"><span class="cm">//</span></div>
<div class="ln" style="left:0px;top:229.60px;width:86px;color:#7E7F84">7</div>
<div class="ln" style="left:0px;top:267.60px;width:86px;color:#7E7F84">8</div>
<div class="cl" style="left:130.50px;top:267.60px"><span class="kw">import</span><span class="pl"> SwiftUI</span></div>
<div class="ln" style="left:0px;top:305.60px;width:86px;color:#7E7F84">9</div>
<div class="ln" style="left:0px;top:343.60px;width:86px;color:#7E7F84">10</div>
<div class="cl" style="left:130.50px;top:343.60px"><span class="kw">struct</span><span class="pl"> </span><span class="dc">ContentView</span><span class="pl">: </span><span class="ty">View</span><span class="pl"> {</span></div>
<div class="ln" style="left:0px;top:381.60px;width:86px;color:#7E7F84">11</div>
<div class="cl" style="left:130.50px;top:381.60px"><span class="pl">    </span><span class="kw">var</span><span class="pl"> </span><span class="od">body</span><span class="pl">: </span><span class="kw">some</span><span class="pl"> </span><span class="ty">View</span><span class="pl"> {</span></div>
<div class="ln" style="left:0px;top:419.60px;width:86px;color:#7E7F84">12</div>
<div class="cl" style="left:130.50px;top:419.60px"><span class="pl">        </span><span class="ty">ZStack</span><span class="pl"> {</span></div>
<div class="ln" style="left:0px;top:457.60px;width:86px;color:#7E7F84">13</div>
<div class="ln" style="left:0px;top:495.60px;width:86px;color:#7E7F84">14</div>
<div class="cl" style="left:130.50px;top:495.60px"><span class="pl">            </span><span class="cm">// First layer (background)</span></div>
<div class="ln" style="left:0px;top:533.60px;width:86px;color:#7E7F84">15</div>
<div class="cl" style="left:130.50px;top:533.60px"><span class="pl">            </span><span class="ty">Color</span><span class="pl">.</span><span class="fn">black</span></div>
<div class="ln" style="left:0px;top:571.60px;width:86px;color:#7E7F84">16</div>
<div class="cl" style="left:130.50px;top:571.60px"><span class="pl">                .</span><span class="fn">ignoresSafeArea</span><span class="pl">()</span></div>
<div class="ln" style="left:0px;top:609.60px;width:86px;color:#7E7F84">17</div>
<div class="ln" style="left:0px;top:647.60px;width:86px;color:#7E7F84">18</div>
<div class="cl" style="left:130.50px;top:647.60px"><span class="pl">            </span><span class="cm">// Second layer (rest of interface)</span></div>
<div class="ln" style="left:0px;top:685.60px;width:86px;color:#7E7F84">19</div>
<div class="cl" style="left:130.50px;top:685.60px"><span class="pl">            </span><span class="ty">VStack</span><span class="pl"> {</span></div>
<div class="ln" style="left:0px;top:723.60px;width:86px;color:#7E7F84">20</div>
<div class="cl" style="left:130.50px;top:723.60px"><span class="pl">                </span><span class="ty">Text</span><span class="pl">(</span><span class="st">&quot;00:09.96&quot;</span><span class="pl">)</span></div>
<div class="ln" style="left:0px;top:761.60px;width:86px;color:#7E7F84">21</div>
<div class="cl" style="left:130.50px;top:761.60px"><span class="pl">                    .</span><span class="fn">font</span><span class="pl">(</span><span class="ty">Font</span><span class="pl">.</span><span class="fn">system</span><span class="pl">(</span><span class="fn">size</span><span class="pl">: </span><span class="nm">90</span><span class="pl">, </span><span class="fn">weight</span><span class="pl">: .</span><span class="fn">thin</span><span class="pl">))</span></div>
<div class="ln" style="left:0px;top:799.60px;width:86px;color:#7E7F84">22</div>
<div class="cl" style="left:130.50px;top:799.60px"><span class="pl">                    .</span><span class="fn">foregroundColor</span><span class="pl">(.</span><span class="fn">white</span><span class="pl">)</span></div>
<div class="ln" style="left:0px;top:837.60px;width:86px;color:#7E7F84">23</div>
<div class="ln" style="left:0px;top:875.60px;width:86px;color:#7E7F84">24</div>
<div class="cl" style="left:130.50px;top:875.60px"><span class="pl">                </span><span class="cm">// Create a circular button</span></div>
<div class="ln" style="left:0px;top:913.60px;width:86px;color:#7E7F84">25</div>
<div class="cl" style="left:130.50px;top:913.60px"><span class="pl">                </span><span class="ty">HStack</span><span class="pl"> {</span></div>
<div class="ln" style="left:0px;top:951.60px;width:86px;color:#7E7F84">26</div>
<div class="cl" style="left:130.50px;top:951.60px"><span class="pl">                    </span><span class="pc">CircleButtonView</span><span class="pl">()</span></div>
<div class="ln" style="left:0px;top:989.60px;width:86px;color:#7E7F84">27</div>
<div class="ln" style="left:0px;top:1027.60px;width:86px;color:#7E7F84">28</div>
<div class="cl" style="left:130.50px;top:1027.60px"><span class="pl">                    </span><span class="ty">Spacer</span><span class="pl">()</span></div>
<div class="ln" style="left:0px;top:1065.60px;width:86px;color:#7E7F84">29</div>
<div class="ln" style="left:0px;top:1103.60px;width:86px;color:#FFFFFF">30</div>
<div class="cl" style="left:130.50px;top:1103.60px"><span class="pl">                    </span><span class="pc">CircleButtonView</span><span class="pl">()</span></div>
<div class="ln" style="left:0px;top:1141.60px;width:86px;color:#7E7F84">31</div>
<div class="cl" style="left:130.50px;top:1141.60px"><span class="pl">                }</span></div>
<div class="ln" style="left:0px;top:1179.60px;width:86px;color:#7E7F84">32</div>
<div class="cl" style="left:130.50px;top:1179.60px"><span class="pl">            }</span></div>
<div class="ln" style="left:0px;top:1217.60px;width:86px;color:#7E7F84">33</div>
<div class="cl" style="left:130.50px;top:1217.60px"><span class="pl">            .</span><span class="fn">padding</span><span class="pl">()</span></div>
<div class="ln" style="left:0px;top:1255.60px;width:86px;color:#7E7F84">34</div>
<div class="cl" style="left:130.50px;top:1255.60px"><span class="pl">        }</span></div>
<div class="ln" style="left:0px;top:1293.60px;width:86px;color:#7E7F84">35</div>
<div class="cl" style="left:130.50px;top:1293.60px"><span class="pl">    }</span></div>
<div class="ln" style="left:0px;top:1331.60px;width:86px;color:#7E7F84">36</div>
<div class="cl" style="left:130.50px;top:1331.60px"><span class="pl">}</span></div>
<div class="ln" style="left:0px;top:1369.60px;width:86px;color:#7E7F84">37</div>
<div class="ln" style="left:0px;top:1407.60px;width:86px;color:#7E7F84">38</div>
<div class="cl" style="left:130.50px;top:1407.60px"><span class="kw">struct</span><span class="pl"> </span><span class="dc">ContentView_Previews</span><span class="pl">: </span><span class="ty">PreviewProvider</span><span class="pl"> {</span></div>
<div class="ln" style="left:0px;top:1445.60px;width:86px;color:#7E7F84">39</div>
<div class="cl" style="left:130.50px;top:1445.60px"><span class="pl">    </span><span class="kw">static</span><span class="pl"> </span><span class="kw">var</span><span class="pl"> </span><span class="od">previews</span><span class="pl">: </span><span class="kw">some</span><span class="pl"> </span><span class="ty">View</span><span class="pl"> {</span></div>
<div class="ln" style="left:0px;top:1483.60px;width:86px;color:#7E7F84">40</div>
<div class="cl" style="left:130.50px;top:1483.60px"><span class="pl">        </span><span class="pc">ContentView</span><span class="pl">()</span></div>
<div class="ln" style="left:0px;top:1521.60px;width:86px;color:#7E7F84">41</div>
<div class="cl" style="left:130.50px;top:1521.60px"><span class="pl">    }</span></div>
<div class="ln" style="left:0px;top:1559.60px;width:86px;color:#7E7F84">42</div>
<div class="cl" style="left:130.50px;top:1559.60px"><span class="pl">}</span></div>
<div class="ln" style="left:0px;top:1597.60px;width:86px;color:#7E7F84">43</div>
</div>
<div class="abs" style="left:1052px;top:78px;width:6px;height:1754px;background:#1E1E20"></div>
<div class="abs" style="left:2299px;top:190px;width:2px;height:1642px;background:#050505"></div>
<div class="abs" style="left:2301px;top:190px;width:723px;height:1642px;background:#585C64"></div>
<div class="abs" style="left:2325px;top:214px;width:62px;height:52px;border-radius:11px;background:#3B3B3D;box-shadow:0 0 0 1px rgba(120,120,120,.35), 0 1px 3px rgba(0,0,0,.2)"></div>
<svg style="left:2345px;top:224px" width="22" height="34" viewBox="0 0 22 34"><path d="M3.5 3.2 H18 M6 3.2 L7.3 11.5 Q3 13.5 3 17.3 H18.6 Q18.6 13.5 14.3 11.5 L15.6 3.2 M10.8 17.3 V31.5" stroke="#EDEDED" stroke-width="2" fill="none" stroke-linejoin="round" stroke-linecap="round"/></svg>
<div class="abs" style="left:2408px;top:214px;width:209px;height:52px;border-radius:12px;background:#6B7FA9;box-shadow:0 0 0 1px rgba(0,0,0,.15), 0 1px 3px rgba(0,0,0,.2)"></div>
<svg style="left:2425px;top:226px" width="25" height="28" viewBox="0 0 25 28"><rect x="1.3" y="9" width="21.6" height="16.5" rx="3.5" fill="none" stroke="#F5F5F7" stroke-width="2.1"/><path d="M2.6 5.7h17.8 M4.5 2.4h13.9" stroke="#F5F5F7" stroke-width="1.7"/></svg>
<div class="ui" style="left:2461.0px;top:227.62px;font-size:23.2px;line-height:26.68px;color:#FFFFFF;font-weight:bold;letter-spacing:-0.55px;">Content View</div>
<div class="abs" style="left:2346px;top:620px;width:10px;height:50px;border-radius:2px;background:#2C2C2E"></div>
<div class="abs" style="left:2346px;top:715px;width:10px;height:94px;border-radius:2px;background:#2C2C2E"></div>
<div class="abs" style="left:2346px;top:837px;width:10px;height:93px;border-radius:2px;background:#2C2C2E"></div>
<div class="abs" style="left:2968px;top:778px;width:10px;height:152px;border-radius:2px;background:#2C2C2E"></div>
<div class="abs" style="left:2353px;top:372px;width:618px;height:1278px;border-radius:122px;background:#2E2E2E;box-shadow:0 0 0 1.5px #7C7C7C"></div>
<div class="abs" style="left:2362px;top:381px;width:600px;height:1260px;border-radius:112px;background:#000"></div>
<div class="abs" style="left:2833px;top:372px;width:8px;height:9px;background:#242424"></div>
<div class="abs" style="left:2963px;top:507px;width:8px;height:9px;background:#242424"></div>
<div class="abs" style="left:2483px;top:1641px;width:8px;height:9px;background:#242424"></div>
<div class="abs" style="left:2353px;top:1507px;width:9px;height:9px;background:#242424"></div>
<div class="abs" style="left:2353px;top:507px;width:9px;height:9px;background:#242424"></div>
<div class="abs" style="left:2963px;top:1507px;width:8px;height:9px;background:#242424"></div>
<svg style="left:0;top:0" width="3024" height="1888" viewBox="0 0 3024 1888"><ellipse cx="2451" cy="917" rx="29.6" ry="44.6" fill="none" stroke="#FFF" stroke-width="5"/><ellipse cx="2526" cy="917" rx="29.6" ry="44.6" fill="none" stroke="#FFF" stroke-width="5"/><ellipse cx="2628" cy="917" rx="29.6" ry="44.6" fill="none" stroke="#FFF" stroke-width="5"/><ellipse cx="2702.3" cy="900.5" rx="28.9" ry="28.1" fill="none" stroke="#FFF" stroke-width="5"/><path d="M2731.2 900 C2732.5 940 2722 961.5 2701.5 961.5 C2688 961.5 2678.5 953 2675.5 941.5" fill="none" stroke="#FFF" stroke-width="5"/><ellipse cx="2796.8" cy="900.5" rx="28.9" ry="28.1" fill="none" stroke="#FFF" stroke-width="5"/><path d="M2825.7 900 C2827.0 940 2816.5 961.5 2796.0 961.5 C2782.5 961.5 2773.0 953 2770.0 941.5" fill="none" stroke="#FFF" stroke-width="5"/><ellipse cx="2872.5" cy="933.5" rx="29.3" ry="28.1" fill="none" stroke="#FFF" stroke-width="5"/><path d="M2843.5 932 C2843 890 2855 872.4 2873.7 872.4 C2887 872.4 2896 880 2899.5 891" fill="none" stroke="#FFF" stroke-width="5"/><circle cx="2577" cy="889.6" r="4.2" fill="#FFF"/><circle cx="2577" cy="944.4" r="4.2" fill="#FFF"/><circle cx="2748" cy="959" r="4.2" fill="#FFF"/></svg>
<svg style="left:0;top:0" width="3024" height="1888" viewBox="0 0 3024 1888"><circle cx="2474.6" cy="1146.3" r="71.5" fill="#8E8E93"/><circle cx="2474.6" cy="1146.3" r="66.5" fill="#000"/><circle cx="2474.6" cy="1146.3" r="63.6" fill="#8E8E93"/></svg>
<div class="ui" style="left:2435.1px;top:1129.23px;font-size:31px;line-height:35.65px;color:#FFFFFF;font-weight:normal;letter-spacing:-1.0px;">Reset</div>
<svg style="left:0;top:0" width="3024" height="1888" viewBox="0 0 3024 1888"><circle cx="2849.6" cy="1146.3" r="71.5" fill="#8E8E93"/><circle cx="2849.6" cy="1146.3" r="66.5" fill="#000"/><circle cx="2849.6" cy="1146.3" r="63.6" fill="#8E8E93"/></svg>
<div class="ui" style="left:2810.1px;top:1129.23px;font-size:31px;line-height:35.65px;color:#FFFFFF;font-weight:normal;letter-spacing:-1.0px;">Reset</div>
<div class="abs" style="left:2325px;top:1756px;width:160px;height:52px;border-radius:14px;background:#3C3C3E;box-shadow:0 0 0 1px rgba(120,120,120,.35), 0 1px 3px rgba(0,0,0,.2)"></div>
<div class="abs" style="left:2505px;top:1756px;width:65px;height:52px;border-radius:14px;background:#3C3C3E;box-shadow:0 0 0 1px rgba(120,120,120,.35), 0 1px 3px rgba(0,0,0,.2)"></div>
<div class="abs" style="left:2590px;top:1756px;width:62px;height:52px;border-radius:14px;background:#3C3C3E;box-shadow:0 0 0 1px rgba(120,120,120,.35), 0 1px 3px rgba(0,0,0,.2)"></div>
<div class="abs" style="left:2792px;top:1756px;width:208px;height:52px;border-radius:14px;background:#3C3C3E;box-shadow:0 0 0 1px rgba(120,120,120,.35), 0 1px 3px rgba(0,0,0,.2)"></div>
<svg style="left:2342px;top:1769px" width="28" height="28" viewBox="0 0 28 28"><circle cx="14" cy="14" r="13.3" fill="#3A82F7"/><path d="M10.5 8.5 L19.5 14 L10.5 19.5 Z" fill="#2B2B2D"/></svg>
<svg style="left:2390px;top:1769px" width="26" height="26" viewBox="0 0 26 26"><rect x="1.5" y="1.5" width="23" height="23" rx="3.5" fill="none" stroke="#E6E6E6" stroke-width="2.2"/><path d="M8 6.5 L17.5 14 L13.3 14.6 L15.8 20 L13.8 20.8 L11.4 15.5 L8 18.3 Z" fill="#E6E6E6"/></svg>
<svg style="left:2436px;top:1769px" width="30" height="26" viewBox="0 0 30 26"><rect x="1.3" y="1.3" width="6.6" height="10" rx="2.2" fill="none" stroke="#E6E6E6" stroke-width="2"/><rect x="1.3" y="14.3" width="6.6" height="10" rx="2.2" fill="none" stroke="#E6E6E6" stroke-width="2"/><rect x="11.3" y="1.3" width="6.6" height="10" rx="2.2" fill="none" stroke="#E6E6E6" stroke-width="2"/><rect x="11.3" y="14.3" width="6.6" height="10" rx="2.2" fill="none" stroke="#E6E6E6" stroke-width="2"/><rect x="21.3" y="1.3" width="6.6" height="10" rx="2.2" fill="none" stroke="#E6E6E6" stroke-width="2"/><rect x="21.3" y="14.3" width="6.6" height="10" rx="2.2" fill="none" stroke="#E6E6E6" stroke-width="2"/></svg>
<svg style="left:2523px;top:1769px" width="28" height="28" viewBox="0 0 28 28"><rect x="1.2" y="1.5" width="25.6" height="10.6" rx="5.3" fill="none" stroke="#E6E6E6" stroke-width="2"/><circle cx="6.8" cy="6.8" r="2.8" fill="#BDBDBD"/><rect x="0.2" y="15" width="27.6" height="12" rx="6" fill="#E6E6E6"/><circle cx="21.5" cy="21" r="3.6" fill="#3C3C3E"/></svg>
<svg style="left:2607px;top:1769px" width="28" height="28" viewBox="0 0 28 28"><circle cx="14" cy="14" r="12.3" fill="none" stroke="#A8A8A8" stroke-width="2.4"/><rect x="10" y="7" width="8" height="14" rx="2" fill="none" stroke="#A8A8A8" stroke-width="1.6"/></svg>
<svg style="left:2807.5px;top:1766px" width="32" height="32" viewBox="0 0 32 32"><circle cx="13.7" cy="13.6" r="9.3" fill="none" stroke="#E6E6E6" stroke-width="3"/><path d="M20.5 20.5 L26.5 26.5" stroke="#E6E6E6" stroke-width="3.2" stroke-linecap="round"/><path d="M9.5 13.6h8.4" stroke="#E6E6E6" stroke-width="2.4"/></svg>
<svg style="left:2855.3px;top:1766px" width="32" height="32" viewBox="0 0 32 32"><circle cx="13.7" cy="13.6" r="9.3" fill="none" stroke="#E6E6E6" stroke-width="3"/><path d="M20.5 20.5 L26.5 26.5" stroke="#E6E6E6" stroke-width="3.2" stroke-linecap="round"/><path d="M11.8 10.5 L14.4 8.8 V18.2" stroke="#E6E6E6" stroke-width="2" fill="none"/></svg>
<svg style="left:2903.2px;top:1766px" width="32" height="32" viewBox="0 0 32 32"><circle cx="13.7" cy="13.6" r="9.3" fill="none" stroke="#A8A8A8" stroke-width="3"/><path d="M20.5 20.5 L26.5 26.5" stroke="#A8A8A8" stroke-width="3.2" stroke-linecap="round"/><rect x="10.2" y="10.1" width="7" height="7" fill="none" stroke="#A8A8A8" stroke-width="2"/></svg>
<svg style="left:2951.4px;top:1766px" width="32" height="32" viewBox="0 0 32 32"><circle cx="13.7" cy="13.6" r="9.3" fill="none" stroke="#E6E6E6" stroke-width="3"/><path d="M20.5 20.5 L26.5 26.5" stroke="#E6E6E6" stroke-width="3.2" stroke-linecap="round"/><path d="M9.6 13.6h8.4 M13.8 9.4v8.4" stroke="#E6E6E6" stroke-width="2.2"/></svg>
<div class="abs" style="left:0;top:1832px;width:3024px;height:2px;background:#050505"></div>
<div class="abs" style="left:0;top:1834px;width:3024px;height:54px;background:#252629"></div>
<svg style="left:22px;top:1851px" width="32" height="20" viewBox="0 0 32 20"><path d="M3 1 H24 Q26 1 27.5 3 L30.5 9 Q31 10 30.5 11 L27.5 17 Q26 19 24 19 H3 Q1 19 1 17 V3 Q1 1 3 1 Z" fill="#3A7CF6"/></svg>
<div class="ui" style="left:2761.0px;top:1847.69px;font-size:22.8px;line-height:26.22px;color:#A1A1A3;font-weight:bold;letter-spacing:0px;">Line: 30  Col: 39</div>
<div class="abs" style="left:2954px;top:1845px;width:2px;height:30px;background:#3A3A3D"></div>
<svg style="left:2972px;top:1848px" width="30" height="26" viewBox="0 0 30 26"><rect x="1.2" y="1.2" width="26.6" height="23.6" rx="4" fill="none" stroke="#A1A1A3" stroke-width="2"/><rect x="4.5" y="15.5" width="20" height="6" rx="1.5" fill="#A1A1A3"/></svg>
</div></body></html>
